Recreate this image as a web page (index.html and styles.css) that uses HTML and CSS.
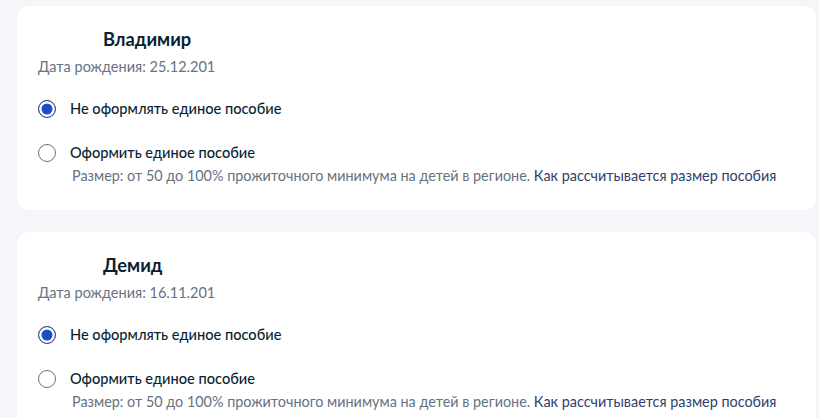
FILE: index.html
```html
<!DOCTYPE html>
<html lang="ru">
<head>
  <meta charset="UTF-8">
  <title>Единое пособие</title>
  <link rel="stylesheet" href="styles.css">
</head>
<body>

  <div class="card">
    <div class="child-name">Владимир</div>
    <div class="child-date">Дата рождения: 25.12.201</div>

    <label class="option">
      <input type="radio" name="child1" checked>
      <span class="radio"></span>
      <span class="option-title">Не оформлять единое пособие</span>
    </label>

    <label class="option">
      <input type="radio" name="child1">
      <span class="radio"></span>
      <span class="option-title">Оформить единое пособие</span>
    </label>
    <div class="option-hint">
      Размер: от 50 до 100% прожиточного минимума на детей в регионе.
      <a href="#">Как рассчитывается размер пособия</a>
    </div>
  </div>

  <div class="card">
    <div class="child-name">Демид</div>
    <div class="child-date">Дата рождения: 16.11.201</div>

    <label class="option">
      <input type="radio" name="child2" checked>
      <span class="radio"></span>
      <span class="option-title">Не оформлять единое пособие</span>
    </label>

    <label class="option">
      <input type="radio" name="child2">
      <span class="radio"></span>
      <span class="option-title">Оформить единое пособие</span>
    </label>
    <div class="option-hint">
      Размер: от 50 до 100% прожиточного минимума на детей в регионе.
      <a href="#">Как рассчитывается размер пособия</a>
    </div>
  </div>

</body>
</html>
```

FILE: styles.css
```css
body {
  margin: 0;
  padding: 6px 3px 0 17px;
  background: #f4f6fa;
  font-family: Lato, "Noto Sans", sans-serif;
  color: #0b1f33;
}
.card {
  background: #fff;
  border-radius: 12px;
  padding: 23px 20px 25px 21px;
  margin-bottom: 22px;
}
.child-name {
  margin-left: 65px;
  font-size: 18.3px;
  font-weight: bold;
  line-height: 20px;
}
.child-date {
  margin-top: 9px;
  font-size: 14.5px;
  line-height: 18px;
  color: #66727f;
}
.option {
  display: flex;
  align-items: center;
  gap: 14px;
  margin-top: 23px;
  cursor: pointer;
}
.option + .option {
  margin-top: 24px;
}
.option input {
  display: none;
}
.radio {
  width: 16px;
  height: 16px;
  border: 1.5px solid #66727f;
  border-radius: 50%;
  box-sizing: content-box;
  flex: none;
}
.option input:checked + .radio {
  border-color: #3a4a72;
  background: #1d4bc9;
  box-shadow: inset 0 0 0 2.5px #fff;
}
.option-title {
  font-size: 14.6px;
  font-weight: 500;
  line-height: 20px;
}
.option-hint {
  margin: 4px 0 0 34px;
  font-size: 14.4px;
  line-height: 18px;
  color: #66727f;
  white-space: nowrap;
}
.option-hint a {
  color: #30406e;
  text-decoration: none;
}
```
